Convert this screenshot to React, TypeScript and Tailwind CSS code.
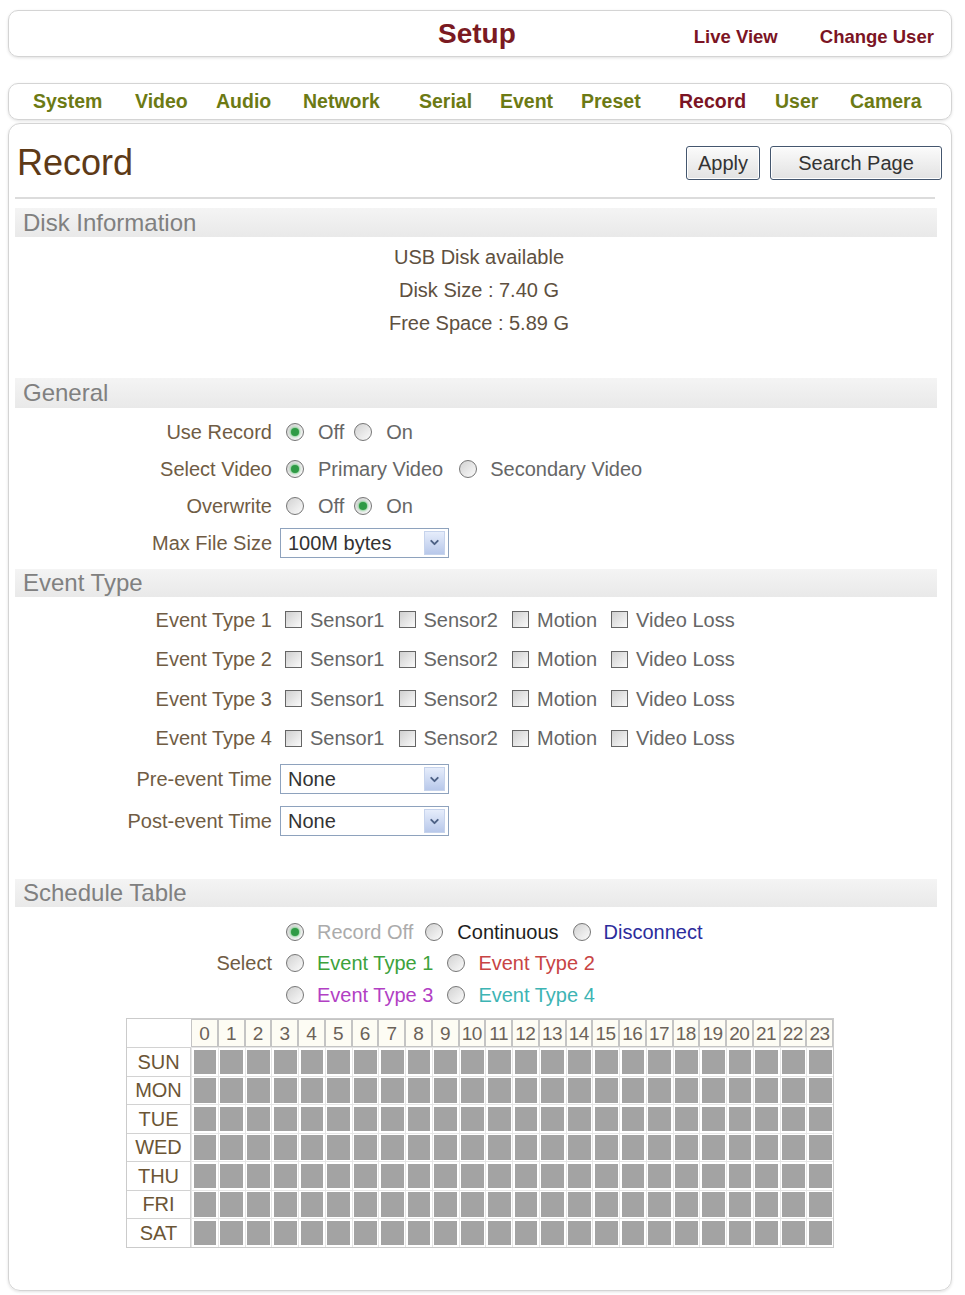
import { Fragment, ReactNode } from "react";
import { ChevronDown } from "lucide-react";

const NAV = [
  { name: "System", w: "w-[102px]" },
  { name: "Video", w: "w-[81px]" },
  { name: "Audio", w: "w-[87px]" },
  { name: "Network", w: "w-[116px]" },
  { name: "Serial", w: "w-[81px]" },
  { name: "Event", w: "w-[81px]" },
  { name: "Preset", w: "w-[98px]" },
  { name: "Record", w: "w-[96px]", active: true },
  { name: "User", w: "w-[75px]" },
  { name: "Camera", w: "w-auto" },
];

const HOURS = Array.from({ length: 24 }, (_, i) => i);
const DAYS = ["SUN", "MON", "TUE", "WED", "THU", "FRI", "SAT"];

function Radio({ on, className = "" }: { on?: boolean; className?: string }) {
  return (
    <span
      className={`inline-flex h-[18px] w-[18px] shrink-0 items-center justify-center rounded-full border border-[#767676] bg-gradient-to-br from-[#d2d2d2] to-[#fbfbfb] ${className}`}
    >
      {on && <span className="h-[8px] w-[8px] rounded-full bg-[#2f9a45] shadow-[0_0_2px_1px_rgba(90,200,110,0.7)]" />}
    </span>
  );
}

function Check({ className = "" }: { className?: string }) {
  return (
    <span
      className={`inline-block h-[17px] w-[17px] shrink-0 border border-[#656565] bg-gradient-to-br from-[#d0d0d0] to-[#fafafa] ${className}`}
    />
  );
}

function Select({ value }: { value: string }) {
  return (
    <div className="relative flex h-[30px] w-[169px] items-center border border-[#8ea2bd] bg-white pl-[7px] text-[#333]">
      {value}
      <span className="absolute top-[2px] right-[3px] bottom-[2px] flex w-[21px] items-center justify-center border border-[#c6d3ec] bg-gradient-to-b from-[#e6edfb] to-[#b8c8ea]">
        <ChevronDown size={13} strokeWidth={3.5} className="text-[#4d6185]" />
      </span>
    </div>
  );
}

function Band({ title, h }: { title: string; h: string }) {
  return (
    <div className={`mr-[14px] ml-[6px] flex items-center bg-gradient-to-b from-[#f4f4f4] to-[#e9e9e9] pl-[8px] text-[24px] text-[#808080] ${h}`}>
      {title}
    </div>
  );
}

function Row({ label, h, children }: { label: string; h: string; children?: ReactNode }) {
  return (
    <div className={`ml-[6px] flex items-center ${h}`}>
      <div className="w-[257px] text-right text-[#705c44]">{label}</div>
      <div className="ml-[8px] flex items-center">{children}</div>
    </div>
  );
}

function EventRow({ n }: { n: number }) {
  const items = ["Sensor1", "Sensor2", "Motion", "Video Loss"];
  return (
    <Row label={`Event Type ${n}`} h="h-[39.5px]">
      {items.map((it, i) => (
        <Fragment key={it}>
          <Check className={i === 0 ? "ml-[5px]" : "ml-[14px]"} />
          <span className="ml-[8px] text-[#666]">{it}</span>
        </Fragment>
      ))}
    </Row>
  );
}

export default function App() {
  return (
    <div className="min-h-screen bg-white pt-[10px] font-['Liberation_Sans',Arial,sans-serif] text-[20px] leading-none">
      <div className="ml-[8px] w-[944px]">
        {/* top bar */}
        <div className="flex h-[47px] items-baseline rounded-[10px] border border-[#d4d4d4] pt-[9px] shadow-[0_1px_3px_rgba(0,0,0,0.12)]">
          <span className="ml-[429px] text-[28px] font-bold text-[#7a1a22]">Setup</span>
          <span className="ml-[178px] text-[18.5px] font-bold text-[#7b1424]">Live View</span>
          <span className="ml-[42px] text-[18.5px] font-bold text-[#7b1424]">Change User</span>
        </div>

        {/* section tabs */}
        <div className="mt-[26px] flex h-[37px] items-center rounded-[10px] border border-[#d4d4d4] pl-[24px] shadow-[0_1px_3px_rgba(0,0,0,0.12)]">
          {NAV.map((n) => (
            <span
              key={n.name}
              className={`${n.w} text-[19.5px] font-bold ${n.active ? "text-[#7b1424]" : "text-[#6c7a14]"}`}
            >
              {n.name}
            </span>
          ))}
        </div>

        {/* main panel */}
        <div className="mt-[3px] rounded-[12px] border border-[#d4d4d4] pt-[16px] pb-[42px] shadow-[0_1px_3px_rgba(0,0,0,0.12)]">
          <div className="flex h-[46px] items-center justify-between pr-[9px] pl-[8px]">
            <h1 className="text-[36px] text-[#5d3a17]">Record</h1>
            <div className="flex items-center">
              <button className="h-[34px] w-[74px] rounded-[3px] border border-[#44566e] bg-gradient-to-b from-[#fbfbfb] to-[#e2e2e2] text-[#333] shadow-[inset_0_0_0_1px_#fff]">
                Apply
              </button>
              <button className="ml-[10px] h-[34px] w-[172px] rounded-[3px] border border-[#44566e] bg-gradient-to-b from-[#fbfbfb] to-[#e2e2e2] text-[#333] shadow-[inset_0_0_0_1px_#fff]">
                Search Page
              </button>
            </div>
          </div>
          <div className="mt-[11px] mr-[16px] ml-[6px] h-[2px] bg-[#dcdcdc]" />

          <div className="mt-[9px]">
            <Band title="Disk Information" h="h-[29px]" />
          </div>
          <div className="mr-[8px] ml-[6px] pt-[4px] text-center text-[#5e5040]">
            <div className="h-[33px] leading-[33px]">USB Disk available</div>
            <div className="h-[33px] leading-[33px]">Disk Size : 7.40 G</div>
            <div className="h-[33px] leading-[33px]">Free Space : 5.89 G</div>
          </div>

          <div className="mt-[38px]">
            <Band title="General" h="h-[30px]" />
          </div>
          <div className="mt-[5px]">
            <Row label="Use Record" h="h-[37px]">
              <Radio on className="ml-[6px]" />
              <span className="ml-[14px] text-[#666]">Off</span>
              <Radio className="ml-[10px]" />
              <span className="ml-[14px] text-[#666]">On</span>
            </Row>
            <Row label="Select Video" h="h-[37px]">
              <Radio on className="ml-[6px]" />
              <span className="ml-[14px] text-[#666]">Primary Video</span>
              <Radio className="ml-[16px]" />
              <span className="ml-[13px] text-[#666]">Secondary Video</span>
            </Row>
            <Row label="Overwrite" h="h-[37px]">
              <Radio className="ml-[6px]" />
              <span className="ml-[14px] text-[#666]">Off</span>
              <Radio on className="ml-[10px]" />
              <span className="ml-[14px] text-[#666]">On</span>
            </Row>
            <Row label="Max File Size" h="h-[37px]">
              <Select value="100M bytes" />
            </Row>
          </div>

          <div className="mt-[8px]">
            <Band title="Event Type" h="h-[28px]" />
          </div>
          <div className="mt-[3px]">
            {[1, 2, 3, 4].map((n) => (
              <EventRow key={n} n={n} />
            ))}
            <Row label="Pre-event Time" h="h-[42px]">
              <Select value="None" />
            </Row>
            <Row label="Post-event Time" h="h-[42px]">
              <Select value="None" />
            </Row>
          </div>

          <div className="mt-[37px]">
            <Band title="Schedule Table" h="h-[28px]" />
          </div>
          <div className="mt-[9px]">
            <Row label="" h="h-[31.5px]">
              <Radio on className="ml-[6px]" />
              <span className="ml-[13px] text-[#ababab]">Record Off</span>
              <Radio className="ml-[12px]" />
              <span className="ml-[14px] text-[#1e1e1e]">Continuous</span>
              <Radio className="ml-[14px]" />
              <span className="ml-[13px] text-[#2c2c9c]">Disconnect</span>
            </Row>
            <Row label="Select" h="h-[31.5px]">
              <Radio className="ml-[6px]" />
              <span className="ml-[13px] text-[#3ca23c]">Event Type 1</span>
              <Radio className="ml-[14px]" />
              <span className="ml-[13px] text-[#c84444]">Event Type 2</span>
            </Row>
            <Row label="" h="h-[31.5px]">
              <Radio className="ml-[6px]" />
              <span className="ml-[13px] text-[#b240c4]">Event Type 3</span>
              <Radio className="ml-[14px]" />
              <span className="ml-[13px] text-[#3db4b4]">Event Type 4</span>
            </Row>
          </div>

          {/* weekly schedule grid */}
          <div className="mt-[7.5px] ml-[117px] grid w-[708px] grid-cols-[64px_repeat(24,minmax(0,1fr))] border border-[#cbcbcb]">
            <div className="h-[28px] bg-white" />
            {HOURS.map((h) => (
              <div
                key={h}
                className="flex h-[28px] items-center justify-center border border-[#c4c4c4] bg-[#fdfcf4] text-[19px] tracking-[-0.5px] text-[#6b6259]"
              >
                {h}
              </div>
            ))}
            {DAYS.map((d) => (
              <Fragment key={d}>
                <div className="flex h-[28.5px] items-center justify-center border-t border-r border-[#d2d2d2] bg-white text-[#6b5535]">
                  {d}
                </div>
                {HOURS.map((h) => (
                  <div key={h} className="h-[28.5px] border-t border-l border-[#e6e6e6] p-[1.5px]">
                    <div className="h-full w-full bg-[#a3a3a3]" />
                  </div>
                ))}
              </Fragment>
            ))}
          </div>
        </div>
      </div>
    </div>
  );
}
